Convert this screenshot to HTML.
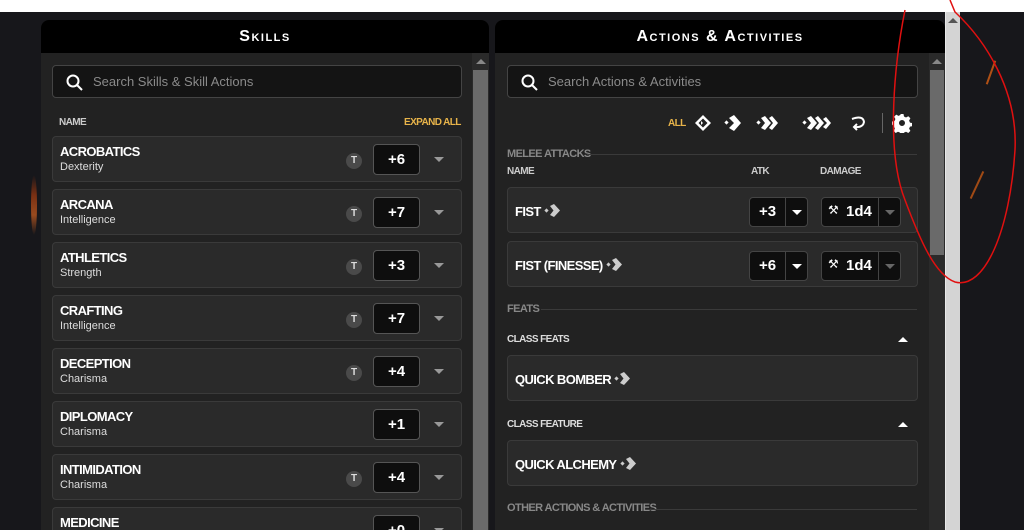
<!DOCTYPE html>
<html><head><meta charset="utf-8"><style>
*{box-sizing:border-box;margin:0;padding:0}
html,body{width:1024px;height:530px;overflow:hidden}
body{background:#17171b;font-family:"Liberation Sans",sans-serif;position:relative;color:#fff}
.abs{position:absolute}
.white{left:0;top:0;width:1024px;height:12px;background:#fff}
.panel{background:#222;border-radius:8px 8px 0 0;overflow:hidden}
.hdr{height:33px;background:#000;color:#fff;text-align:center;font-family:"Liberation Sans",sans-serif;font-weight:bold;font-size:16px;line-height:33px;letter-spacing:1.5px;font-variant:small-caps}
.search{border:1px solid #444;background:#141414;border-radius:4px;height:33px;color:#8a8a8a;font-size:13px;line-height:31px;padding-left:40px}
.search svg{position:absolute;left:13px;top:8px}
.cond{font-family:"Liberation Sans Narrow","Liberation Sans",sans-serif;font-weight:bold;letter-spacing:-0.6px}
.row{background:#2a2a2a;border:1px solid #3a3a3a;border-radius:4px;height:46px}
.row .n{position:absolute;left:7px;top:7px;font-size:13px;color:#fff}
.row .s{position:absolute;left:7px;top:24px;font-size:11px;color:#ddd}
.t{position:absolute;left:293px;top:16px;width:16px;height:16px;border-radius:50%;background:#4a4a4a;color:#ddd;font-size:10px;font-weight:bold;text-align:center;line-height:16px}
.v{position:absolute;left:320px;top:7px;width:47px;height:31px;background:#0e0e0e;border:1px solid #555;border-radius:4px;text-align:center;line-height:29px;font-size:15px;font-weight:bold}
.car{position:absolute;width:0;height:0;border-left:5px solid transparent;border-right:5px solid transparent;border-top:5px solid #999}
.lbl{font-size:10px;color:#aaa}
.sec{font-size:11px;color:#888}
.line{height:1px;background:#3a3a3a}
.box{position:absolute;background:#0e0e0e;border:1px solid #444;border-radius:4px;height:30px}
.ai{display:inline-block;vertical-align:-2px;margin-left:3px}
</style></head><body>
<div class="abs white"></div>
<svg width="0" height="0" style="position:absolute"><defs><g id="a1"><rect x="1" y="6" width="3" height="3" transform="rotate(45 2.5 7.5)" fill="#ccc"/><path d="M6 3 L10 1 L16 7.5 L10 14 L6 12 L9.5 7.5 Z" fill="#ccc"/></g></defs></svg>
<!-- embers -->
<div class="abs" style="left:31px;top:175px;width:6px;height:60px;background:linear-gradient(#0000,#a33a10,#d06020,#0000);border-radius:50%;opacity:.7"></div>
<div class="abs" style="left:990px;top:60px;width:2px;height:25px;background:#b05015;transform:rotate(20deg)"></div>
<div class="abs" style="left:976px;top:170px;width:2px;height:30px;background:#a04a15;transform:rotate(25deg)"></div>

<!-- Skills panel -->
<div class="abs panel" style="left:41px;top:20px;width:448px;height:510px">
  <div class="hdr">Skills</div>
  <div class="abs search" style="left:11px;top:45px;width:410px"><svg width="18" height="18" viewBox="0 0 18 18"><circle cx="7" cy="7" r="5.5" stroke="#fff" stroke-width="2" fill="none"/><path d="M11 11 L16 16" stroke="#fff" stroke-width="2"/></svg>Search Skills &amp; Skill Actions</div>
  <div class="abs cond lbl" style="left:18px;top:97px;color:#ccc">NAME</div>
  <div class="abs cond lbl" style="left:363px;top:97px;color:#e8b44a">EXPAND ALL</div>
  <div class="abs" style="left:431px;top:33px;width:17px;height:477px;background:#2a2a2a"></div>
  <div class="abs" style="left:432px;top:50px;width:15px;height:460px;background:#6a6a6a"></div>
  <div class="abs car" style="left:435px;top:39px;border-top:none;border-bottom:5px solid #888"></div>
</div>
<div class="abs" style="left:52px;top:136px;width:410px">
  <div class="abs row" style="left:0;top:0;width:410px"><div class="n cond">ACROBATICS</div><div class="s">Dexterity</div><div class="t">T</div><div class="v">+6</div><div class="car" style="left:381px;top:20px"></div></div>
  <div class="abs row" style="left:0;top:53px;width:410px"><div class="n cond">ARCANA</div><div class="s">Intelligence</div><div class="t">T</div><div class="v">+7</div><div class="car" style="left:381px;top:20px"></div></div>
  <div class="abs row" style="left:0;top:106px;width:410px"><div class="n cond">ATHLETICS</div><div class="s">Strength</div><div class="t">T</div><div class="v">+3</div><div class="car" style="left:381px;top:20px"></div></div>
  <div class="abs row" style="left:0;top:159px;width:410px"><div class="n cond">CRAFTING</div><div class="s">Intelligence</div><div class="t">T</div><div class="v">+7</div><div class="car" style="left:381px;top:20px"></div></div>
  <div class="abs row" style="left:0;top:212px;width:410px"><div class="n cond">DECEPTION</div><div class="s">Charisma</div><div class="t">T</div><div class="v">+4</div><div class="car" style="left:381px;top:20px"></div></div>
  <div class="abs row" style="left:0;top:265px;width:410px"><div class="n cond">DIPLOMACY</div><div class="s">Charisma</div><div class="v">+1</div><div class="car" style="left:381px;top:20px"></div></div>
  <div class="abs row" style="left:0;top:318px;width:410px"><div class="n cond">INTIMIDATION</div><div class="s">Charisma</div><div class="t">T</div><div class="v">+4</div><div class="car" style="left:381px;top:20px"></div></div>
  <div class="abs row" style="left:0;top:371px;width:410px"><div class="n cond">MEDICINE</div><div class="s">Wisdom</div><div class="v">+0</div><div class="car" style="left:381px;top:20px"></div></div>
</div>

<!-- Actions panel -->
<div class="abs panel" style="left:495px;top:20px;width:450px;height:510px">
  <div class="hdr">Actions &amp; Activities</div>
  <div class="abs search" style="left:12px;top:45px;width:411px"><svg width="18" height="18" viewBox="0 0 18 18"><circle cx="7" cy="7" r="5.5" stroke="#fff" stroke-width="2" fill="none"/><path d="M11 11 L16 16" stroke="#fff" stroke-width="2"/></svg>Search Actions &amp; Activities</div>
  <div class="abs" style="left:434px;top:33px;width:16px;height:477px;background:#2a2a2a"></div>
  <div class="abs" style="left:435px;top:50px;width:14px;height:185px;background:#6a6a6a"></div>
  <div class="abs car" style="left:437px;top:39px;border-top:none;border-bottom:5px solid #888"></div>
</div>
<div class="abs cond lbl" style="left:668px;top:118px;color:#e8b44a">ALL</div>
<svg class="abs" style="left:693px;top:113px" width="200" height="20" viewBox="0 0 200 20">
  <g fill="#fff">
    <path d="M10 2 L18 10 L10 18 L2 10 Z M10 5.5 L5.5 10 L10 14.5 L14.5 10 Z" fill-rule="evenodd"/>
    <path d="M8 8 L10 10 L8 12 Z"/>
    <rect x="32" y="8" width="3" height="3" transform="rotate(45 33.5 9.5)"/>
    <path d="M36 5 L41 2 L48 10 L41 18 L36 15 L41 10 Z"/>
    <rect x="64" y="8" width="3" height="3" transform="rotate(45 65.5 9.5)"/>
    <path d="M68 5 L72 3 L78 10 L72 17 L68 15 L72 10 Z"/>
    <path d="M76 5 L79 3 L85 10 L79 17 L76 15 L80 10 Z"/>
    <rect x="110" y="8" width="3" height="3" transform="rotate(45 111.5 9.5)"/>
    <path d="M114 5 L118 3 L124 10 L118 17 L114 15 L118 10 Z"/>
    <path d="M122 5 L125 3 L131 10 L125 17 L122 15 L126 10 Z"/>
    <path d="M130 6 L133 4 L138 10 L133 16 L130 14 L134 10 Z"/>
  </g>
  <path d="M159 6 Q170 2 171 9 Q170 15 161 14 M164 11 L161 14 L164 17" stroke="#fff" stroke-width="2" fill="none"/>
  <rect x="189" y="0" width="1" height="20" fill="#666"/>
</svg>
<svg class="abs" style="left:892px;top:113px" width="20" height="20" viewBox="0 0 20 20"><path fill="#fff" fill-rule="evenodd" d="M8.5 1h3l.5 2.5 2 1 2.3-1.3 2.1 2.1-1.3 2.3.9 2 2.5.5v3l-2.5.5-.9 2 1.3 2.3-2.1 2.1-2.3-1.3-2 .9-.5 2.5h-3l-.5-2.5-2-.9-2.3 1.3-2.1-2.1 1.3-2.3-.9-2L0 11.5v-3l2.5-.5.9-2-1.3-2.3 2.1-2.1 2.3 1.3 2-1zM10 7a3 3 0 1 0 0 6 3 3 0 1 0 0-6z"/></svg>

<div class="abs cond sec" style="left:507px;top:148px">MELEE ATTACKS</div>
<div class="abs line" style="left:587px;top:154px;width:330px"></div>
<div class="abs cond lbl" style="left:507px;top:166px;color:#ccc">NAME</div>
<div class="abs cond lbl" style="left:751px;top:166px;color:#ccc">ATK</div>
<div class="abs cond lbl" style="left:820px;top:166px;color:#ccc">DAMAGE</div>

<div class="abs row" style="left:507px;top:187px;width:411px">
  <div class="n cond" style="top:15px">FIST<svg class="ai" width="17" height="15"><use href="#a1"/></svg></div>
  <div class="box" style="left:241px;top:9px;width:59px"><span class="abs" style="left:9px;top:5px;font-size:15px;font-weight:bold">+3</span><div class="abs" style="left:35px;top:0;width:1px;height:28px;background:#444"></div><div class="car" style="left:42px;top:12px;border-top-color:#fff"></div></div>
  <div class="box" style="left:313px;top:9px;width:80px"><span class="abs" style="left:6px;top:5px;font-size:12px">⚒</span><span class="abs" style="left:24px;top:5px;font-size:15px;font-weight:bold">1d4</span><div class="abs" style="left:56px;top:0;width:1px;height:28px;background:#444"></div><div class="car" style="left:63px;top:12px;border-top-color:#666"></div></div>
</div>
<div class="abs row" style="left:507px;top:241px;width:411px">
  <div class="n cond" style="top:15px">FIST (FINESSE)<svg class="ai" width="17" height="15"><use href="#a1"/></svg></div>
  <div class="box" style="left:241px;top:9px;width:59px"><span class="abs" style="left:9px;top:5px;font-size:15px;font-weight:bold">+6</span><div class="abs" style="left:35px;top:0;width:1px;height:28px;background:#444"></div><div class="car" style="left:42px;top:12px;border-top-color:#fff"></div></div>
  <div class="box" style="left:313px;top:9px;width:80px"><span class="abs" style="left:6px;top:5px;font-size:12px">⚒</span><span class="abs" style="left:24px;top:5px;font-size:15px;font-weight:bold">1d4</span><div class="abs" style="left:56px;top:0;width:1px;height:28px;background:#444"></div><div class="car" style="left:63px;top:12px;border-top-color:#666"></div></div>
</div>

<div class="abs cond sec" style="left:507px;top:303px">FEATS</div>
<div class="abs line" style="left:541px;top:309px;width:376px"></div>
<div class="abs cond lbl" style="left:507px;top:334px;color:#ddd">CLASS FEATS</div>
<div class="abs car" style="left:898px;top:337px;border-top:none;border-bottom:5px solid #fff"></div>
<div class="abs row" style="left:507px;top:355px;width:411px"><div class="n cond" style="top:15px">QUICK BOMBER<svg class="ai" width="17" height="15"><use href="#a1"/></svg></div></div>
<div class="abs cond lbl" style="left:507px;top:419px;color:#ddd">CLASS FEATURE</div>
<div class="abs car" style="left:898px;top:422px;border-top:none;border-bottom:5px solid #fff"></div>
<div class="abs row" style="left:507px;top:440px;width:411px"><div class="n cond" style="top:15px">QUICK ALCHEMY<svg class="ai" width="17" height="15"><use href="#a1"/></svg></div></div>
<div class="abs cond sec" style="left:507px;top:502px">OTHER ACTIONS &amp; ACTIVITIES</div>
<div class="abs line" style="left:649px;top:509px;width:268px"></div>

<!-- window scrollbar -->
<div class="abs" style="left:945px;top:12px;width:15px;height:518px;background:#d4d4d4;border-left:1px solid #e8e8e8"></div>
<div class="abs car" style="left:948px;top:18px;border-top:none;border-bottom:5px solid #555"></div>

<!-- red annotation -->
<svg class="abs" style="left:0;top:0" width="1024" height="530"><path d="M905 10 C895 60 885 150 905 200 C920 240 935 275 955 282 C985 290 1010 230 1015 150 C1018 90 985 40 955 12 L950 0" stroke="#e01010" stroke-width="1.5" fill="none"/></svg>
</body></html>
